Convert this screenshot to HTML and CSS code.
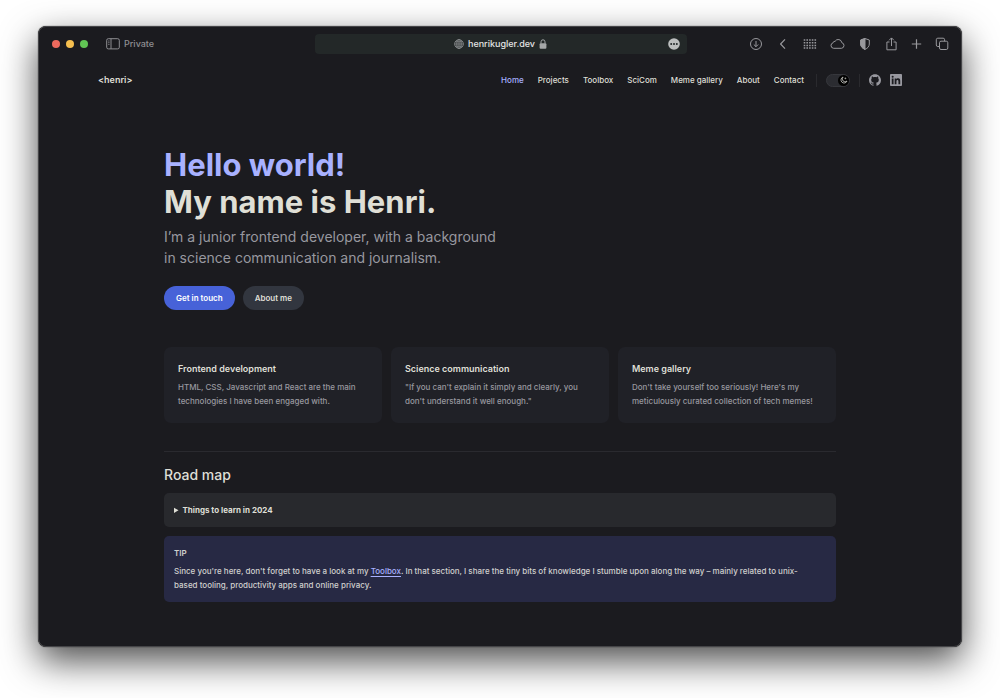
FILE: index.html
```html
<!DOCTYPE html>
<html lang="en">
<head>
<meta charset="utf-8">
<meta name="viewport" content="width=device-width, initial-scale=1">
<title>henrikugler.dev</title>
<link rel="stylesheet" href="styles.css">
</head>
<body>
<div class="window">
  <div class="toolbar">
    <div class="toolbar-left">
      <div class="lights"><span class="light light-red"></span><span class="light light-yellow"></span><span class="light light-green"></span></div>
      <button class="private" type="button">
        <svg width="14" height="12" viewBox="0 0 14 12" fill="none" stroke="currentColor"><rect x="0.7" y="0.7" width="12.6" height="10.2" rx="1.6"/><path d="M5 .7v10.2"/><path d="M2 3h1.6M2 4.7h1.6M2 6.4h1.6" stroke-width=".7"/></svg>
        Private
      </button>
    </div>
    <div class="address">
      <div class="address-text">
        <svg width="10" height="10" viewBox="0 0 10 10" fill="none" stroke="#8c8e90" stroke-width=".8"><circle cx="5" cy="5" r="4.4"/><ellipse cx="5" cy="5" rx="2.2" ry="4.4"/><path d="M5 .6v8.8M.6 5h8.8M1.2 2.8h7.6M1.2 7.2h7.6"/></svg>
        <span>henrikugler.dev</span>
        <svg width="8" height="10" viewBox="0 0 8 10"><rect x=".6" y="4.2" width="6.8" height="5.5" rx="1" fill="#a5a7a8"/><path d="M2 4.5V2.8a2 2 0 0 1 4 0v1.7" fill="none" stroke="#a5a7a8"/></svg>
      </div>
      <button class="more" type="button" aria-label="Page menu"><svg width="12" height="12" viewBox="0 0 12 12"><circle cx="6" cy="6" r="5.8" fill="#bdbfbf"/><g fill="#232828"><circle cx="3.2" cy="6" r="1"/><circle cx="6" cy="6" r="1"/><circle cx="8.8" cy="6" r="1"/></g></svg></button>
    </div>
    <div class="tools">
      <button type="button" aria-label="Downloads"><svg width="14" height="14" viewBox="0 0 14 14"><circle cx="7" cy="7" r="5.5"/><path d="M7 4v5.6M4.8 7.5 7 9.7l2.2-2.2"/></svg></button>
      <button type="button" aria-label="Back"><svg width="14" height="14" viewBox="0 0 14 14"><path d="M9 2.4 4.6 7 9 11.6" stroke-width="1.2"/></svg></button>
      <button type="button" aria-label="Grid"><svg width="14" height="14" viewBox="0 0 14 14"><path d="M.7 3h13M.7 5.700h13M.7 8.400h13M.7 11.100h13" stroke-width="1.500" stroke-dasharray="1.600 1.100"/></svg></button>
      <button type="button" aria-label="Cloud"><svg width="15" height="14" viewBox="0 0 15 14"><path d="M3.600 11.300a2.800 2.800 0 0 1-.5-5.500 1.800 1.800 0 0 1 2-1.500 3.600 3.600 0 0 1 6.700 1.400 2.850 2.850 0 0 1-.3 5.600z"/></svg></button>
      <button type="button" aria-label="Privacy report"><svg width="14" height="14" viewBox="0 0 14 14"><path d="M7 1.500 11.300 3v4c0 2.500-1.600 4.200-4.300 5.400C4.300 11.200 2.700 9.500 2.700 7V3z"/><path d="M7 1.500v10.900C4.300 11.200 2.700 9.500 2.700 7V3z" fill="currentColor"/></svg></button>
      <button type="button" aria-label="Share"><svg width="13" height="14" viewBox="0 0 13 14"><path d="M4.500 5H1.900v7.800h9.200V5H8.500M6.500 9V1M4.100 3.300 6.500.9l2.400 2.400"/></svg></button>
      <button type="button" aria-label="New tab"><svg width="11" height="14" viewBox="0 0 11 14"><path d="M5.500 2.300v9.400M.8 7h9.400" stroke-width="1.200"/></svg></button>
      <button type="button" aria-label="Tab overview"><svg width="14" height="14" viewBox="0 0 14 14"><rect x="4.500" y="4.200" width="8.300" height="8.300" rx="1.500"/><path d="M4.500 9.500H2.800A1.500 1.500 0 0 1 1.300 8V2.700a1.500 1.500 0 0 1 1.500-1.500h5.300a1.500 1.500 0 0 1 1.500 1.500v1.500"/></svg></button>
    </div>
  </div>

  <header class="site-header">
    <a class="brand" href="#">&lt;henri&gt;</a>
    <nav class="nav">
      <a class="active" href="#">Home</a>
      <a href="#">Projects</a>
      <a href="#toolbox">Toolbox</a>
      <a href="#">SciCom</a>
      <a href="#">Meme gallery</a>
      <a href="#">About</a>
      <a href="#">Contact</a>
    </nav>
    <div class="appearance">
      <button class="switch" type="button" role="switch" aria-checked="true" aria-label="Dark theme"><span class="knob"><svg width="8" height="8" viewBox="0 0 8 8" fill="none" stroke="#c8c8c3" stroke-width=".8"><path d="M3.100 1a3.100 3.100 0 1 0 3.900 4A2.700 2.700 0 0 1 3.100 1z"/><path d="M5.400 1.500v1.800M4.500 2.400h1.800" stroke-width=".6"/></svg></span></button>
    </div>
    <div class="social">
      <a href="#" aria-label="GitHub"><svg width="12" height="12" viewBox="0 0 24 24" fill="currentColor"><path d="M12 .297c-6.630 0-12 5.373-12 12 0 5.303 3.438 9.800 8.205 11.385.6.113.820-.258.820-.577 0-.285-.010-1.040-.015-2.040-3.338.724-4.042-1.610-4.042-1.610C4.422 18.070 3.633 17.700 3.633 17.700c-1.087-.744.084-.729.084-.729 1.205.084 1.838 1.236 1.838 1.236 1.070 1.835 2.809 1.305 3.495.998.108-.776.417-1.305.760-1.605-2.665-.300-5.466-1.332-5.466-5.930 0-1.310.465-2.380 1.235-3.220-.135-.303-.540-1.523.105-3.176 0 0 1.005-.322 3.300 1.230.960-.267 1.980-.399 3-.405 1.020.006 2.040.138 3 .405 2.280-1.552 3.285-1.230 3.285-1.230.645 1.653.240 2.873.120 3.176.765.840 1.230 1.910 1.230 3.220 0 4.610-2.805 5.625-5.475 5.920.420.360.810 1.096.810 2.220 0 1.606-.015 2.896-.015 3.286 0 .315.210.690.825.570C20.565 22.092 24 17.592 24 12.297c0-6.627-5.373-12-12-12"/></svg></a>
      <a href="#" aria-label="LinkedIn"><svg width="12" height="12" viewBox="0 0 24 24" fill="currentColor"><path d="M20.447 20.452h-3.554v-5.569c0-1.328-.027-3.037-1.852-3.037-1.853 0-2.136 1.445-2.136 2.939v5.667H9.351V9h3.414v1.561h.046c.477-.900 1.637-1.850 3.370-1.850 3.601 0 4.267 2.370 4.267 5.455v6.286zM5.337 7.433a2.062 2.062 0 0 1-2.063-2.065 2.064 2.064 0 1 1 2.063 2.065zm1.782 13.019H3.555V9h3.564v11.452zM22.225 0H1.771C.792 0 0 .774 0 1.729v20.542C0 23.227.792 24 1.771 24h20.451C23.200 24 24 23.227 24 22.271V1.729C24 .774 23.200 0 22.222 0h.003z"/></svg></a>
    </div>
  </header>

  <main class="content">
    <section class="hero">
      <h1><span class="accent">Hello world!</span><br>My name is Henri.</h1>
      <p class="lead">I’m a junior frontend developer, with a background<br>in science communication and journalism.</p>
      <div class="actions">
        <a class="btn btn-brand" href="#">Get in touch</a>
        <a class="btn btn-alt" href="#">About me</a>
      </div>
    </section>

    <section class="cards">
      <article class="card"><h2>Frontend development</h2><p>HTML, CSS, Javascript and React are the main technologies I have been engaged with.</p></article>
      <article class="card"><h2>Science communication</h2><p>"If you can't explain it simply and clearly, you don't understand it well enough."</p></article>
      <article class="card"><h2>Meme gallery</h2><p>Don't take yourself too seriously! Here's my meticulously curated collection of tech memes!</p></article>
    </section>

    <section class="roadmap">
      <h2>Road map</h2>
      <details class="block">
        <summary>Things to learn in 2024</summary>
      </details>
      <div class="block tip">
        <p class="tip-title">TIP</p>
        <p>Since you're here, don't forget to have a look at my <a href="#toolbox">Toolbox</a>. In that section, I share the tiny bits of knowledge I stumble upon along the way – mainly related to unix-<wbr>based tooling, productivity apps and online privacy.</p>
      </div>
    </section>
  </main>
</div>
</body>
</html>
```

FILE: styles.css
```css
* {
  box-sizing: border-box;
}

body {
  margin: 0;
  padding: 26px 38px 51px;
  min-height: 100vh;
  display: flex;
  background: #fff;
  color: #dfdfd6;
  font-family: Inter, "Liberation Sans", sans-serif;
  font-size: 8px;
  font-weight: 500;
  line-height: 14px;
}

h1, h2, p {
  margin: 0;
}

a {
  color: inherit;
  text-decoration: none;
}

button {
  display: flex;
  align-items: center;
  padding: 0;
  border: 0;
  background: none;
  color: inherit;
  font: inherit;
}

svg {
  display: block;
}

.window {
  flex: 1;
  min-width: 0;
  background: #1b1b1f;
  border: 1px solid #454548;
  border-radius: 8px;
  box-shadow: 0 0 1px #000, 0 14px 36px rgba(0, 0, 0, 0.7);
}

/* Browser toolbar */
.toolbar {
  display: grid;
  grid-template-columns: 1fr minmax(0, 372px) 1fr;
  align-items: center;
  height: 34px;
  padding: 0 12px 0 13px;
}

.toolbar-left {
  display: flex;
  align-items: center;
  gap: 18px;
}

.lights {
  display: flex;
  gap: 6px;
}

.light {
  width: 8px;
  height: 8px;
  border-radius: 50%;
}

.light-red { background: #ed6a5e; }
.light-yellow { background: #f5bf4f; }
.light-green { background: #61c554; }

.private {
  gap: 4px;
  color: #8e8e92;
  font-size: 9px;
  font-weight: 500;
}

.address {
  display: grid;
  grid-template-columns: 12px 1fr 12px;
  align-items: center;
  height: 20px;
  padding: 0 7px;
  border-radius: 4px;
  background: #232828;
}

.address-text {
  grid-column: 2;
  display: flex;
  align-items: center;
  justify-content: center;
  gap: 4px;
  color: #e4e4e4;
  font-size: 9px;
}

.tools {
  display: flex;
  justify-content: flex-end;
  gap: 13px;
  color: #98989c;
}

.tools svg {
  fill: none;
  stroke: currentColor;
  stroke-linejoin: round;
}

/* Site header */
.site-header {
  display: flex;
  align-items: center;
  height: 38px;
  padding: 0 59px;
}

.brand {
  margin-right: auto;
  font-size: 9px;
  font-weight: 600;
}

.nav {
  display: flex;
  gap: 14px;
}

.active,
.accent {
  color: #a8b1ff;
}

.appearance {
  margin-left: 12px;
  padding: 0 9px;
  border: solid #2a2a2e;
  border-width: 0 1px;
}

.switch {
  justify-content: flex-end;
  width: 24px;
  height: 13px;
  border: 1px solid #36373c;
  border-radius: 7px;
  background: #2b2c31;
}

.knob {
  display: grid;
  place-items: center;
  width: 11px;
  height: 11px;
  border-radius: 50%;
  background: #000;
}

.social {
  display: flex;
  gap: 9px;
  margin-left: 9px;
  color: #98989f;
}

/* Page content */
.content {
  max-width: 672px;
  margin: 0 auto;
  padding: 47px 0 44px;
}

.hero h1 {
  font-size: 31px;
  font-weight: 700;
  line-height: 37px;
}

.lead {
  margin-top: 6px;
  color: #98989f;
  font-size: 14px;
  font-weight: 400;
  line-height: 21px;
}

.actions {
  display: flex;
  gap: 8px;
  margin-top: 18px;
}

.btn {
  padding: 5px 12px;
  border-radius: 12px;
  font-weight: 600;
}

.btn-brand {
  background: #4762d8;
  color: #fff;
}

.btn-alt {
  background: #32363f;
}

.cards {
  display: grid;
  grid-template-columns: repeat(3, 1fr);
  gap: 9px;
  margin-top: 37px;
}

.card {
  padding: 15px 14px;
  border-radius: 7px;
  background: #202127;
}

.card h2 {
  font-size: 9px;
  font-weight: 600;
  line-height: 14px;
}

.card p {
  margin-top: 4px;
  color: #98989f;
}

.roadmap {
  margin-top: 28px;
  padding-top: 13px;
  border-top: 1px solid #2a2a2f;
}

.roadmap h2 {
  font-size: 14px;
  font-weight: 500;
  line-height: 20px;
}

.block {
  margin-top: 9px;
  padding: 10px;
  border-radius: 5px;
  background: #28292d;
}

.roadmap h2 + .block {
  margin-top: 8px;
}

summary {
  font-weight: 700;
}

.tip {
  padding-right: 20px;
  background: #272944;
  color: #d0d0ce;
}

.tip-title {
  margin-bottom: 4px;
  font-weight: 600;
}

.tip a {
  color: #a8b1ff;
  text-decoration: underline;
  text-underline-offset: 2px;
}
```
